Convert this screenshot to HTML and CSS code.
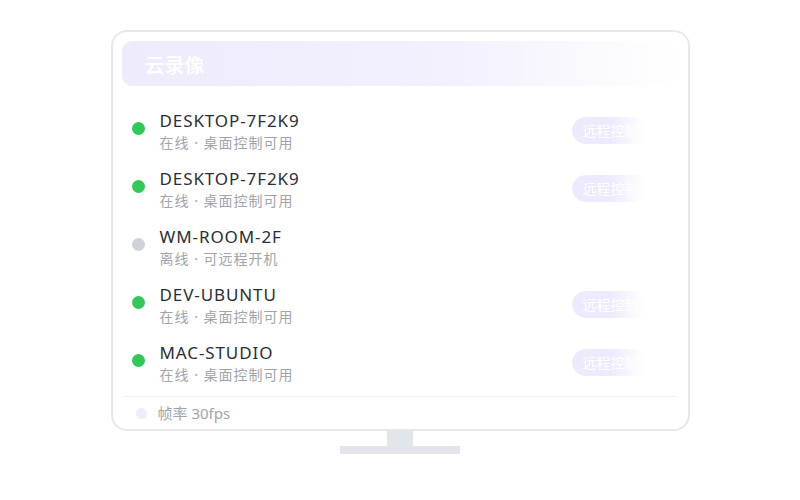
FILE: index.html
```html
<!DOCTYPE html>
<html lang="zh">
<head>
<meta charset="utf-8">
<title>云录像</title>
<link rel="stylesheet" href="styles.css">
</head>
<body>
<div class="scene">
  <div class="monitor">
    <div class="header"><span class="title">云录像</span></div>
    <div class="list">
      <div class="row">
        <span class="dot on"></span>
        <div class="info"><div class="name">DESKTOP-7F2K9</div><div class="sub">在线 · 桌面控制可用</div></div>
        <span class="btn">远程控制</span>
      </div>
      <div class="row">
        <span class="dot on"></span>
        <div class="info"><div class="name">DESKTOP-7F2K9</div><div class="sub">在线 · 桌面控制可用</div></div>
        <span class="btn">远程控制</span>
      </div>
      <div class="row">
        <span class="dot off"></span>
        <div class="info"><div class="name">WM-ROOM-2F</div><div class="sub">离线 · 可远程开机</div></div>
      </div>
      <div class="row">
        <span class="dot on"></span>
        <div class="info"><div class="name">DEV-UBUNTU</div><div class="sub">在线 · 桌面控制可用</div></div>
        <span class="btn">远程控制</span>
      </div>
      <div class="row">
        <span class="dot on"></span>
        <div class="info"><div class="name">MAC-STUDIO</div><div class="sub">在线 · 桌面控制可用</div></div>
        <span class="btn">远程控制</span>
      </div>
    </div>
    <div class="divider"></div>
    <div class="footer"><span class="fdot"></span><span class="ftext">帧率 30fps</span></div>
  </div>
  <div class="neck"></div>
  <div class="base"></div>
</div>
</body>
</html>
```
FILE: styles.css
```css
html, body {
  margin: 0;
  padding: 0;
  background: #ffffff;
}
body {
  width: 800px;
  height: 500px;
  overflow: hidden;
  font-family: "Noto Sans", "Noto Sans CJK SC", sans-serif;
}
.scene {
  display: flex;
  flex-direction: column;
  align-items: center;
  padding-top: 30px;
}
.monitor {
  box-sizing: border-box;
  width: 579px;
  height: 401px;
  border: 2px solid #e6e8ec;
  border-radius: 16px;
  padding: 9px 9px 6px 9px;
  display: flex;
  flex-direction: column;
  background: #fff;
}
.header {
  height: 45px;
  border-radius: 10px;
  background: linear-gradient(to right, #eeebfd 0%, #f3f1fe 60%, #ffffff 100%);
  display: flex;
  align-items: center;
  padding-left: 23px;
}
.title {
  color: #ffffff;
  font-family: "Noto Sans CJK SC", sans-serif;
  font-size: 20px;
  font-weight: 500;
  line-height: 24px;
  padding-top: 2px;
}
.list {
  margin-top: 13px;
  display: flex;
  flex-direction: column;
}
.row {
  height: 58px;
  display: flex;
  align-items: center;
  padding-left: 10px;
  padding-right: 29px;
}
.dot {
  width: 13px;
  height: 13px;
  border-radius: 50%;
  flex: none;
}
.dot.on { background: #34c759; }
.dot.off { background: #cfd3d9; }
.info {
  margin-left: 15px;
  flex: 1;
  align-self: flex-start;
  padding-top: 11px;
}
.name {
  font-family: "Noto Sans", sans-serif;
  font-size: 17px;
  line-height: 22px;
  color: #2a2e38;
  letter-spacing: 0.9px;
}
.sub {
  margin-top: 1px;
  font-family: "Noto Sans", "Noto Sans CJK SC", sans-serif;
  font-size: 14px;
  line-height: 20px;
  color: #a0a5ad;
  letter-spacing: 1px;
}
.btn {
  height: 27px;
  line-height: 27px;
  padding: 0 11px;
  border-radius: 14px;
  background: #eeeafd;
  color: #ffffff;
  font-family: "Noto Sans CJK SC", sans-serif;
  font-size: 14px;
  margin-top: 4px;
  -webkit-mask-image: linear-gradient(to right, #000 0%, #000 50%, transparent 92%);
  mask-image: linear-gradient(to right, #000 0%, #000 50%, transparent 92%);
}
.divider {
  margin: 7px 2px 0 2px;
  height: 1px;
  background: #eef0f3;
}
.footer {
  display: flex;
  align-items: center;
  padding: 6px 0 0 14px;
  height: 20px;
}
.fdot {
  width: 11px;
  height: 11px;
  border-radius: 50%;
  background: #efedfd;
}
.ftext {
  margin-left: 11px;
  font-family: "Noto Sans", "Noto Sans CJK SC", sans-serif;
  font-size: 15px;
  line-height: 20px;
  color: #a0a5ad;
}
.neck {
  width: 26px;
  height: 15px;
  background: #e2e5e9;
}
.base {
  width: 120px;
  height: 8px;
  background: #e2e5e9;
}
```
